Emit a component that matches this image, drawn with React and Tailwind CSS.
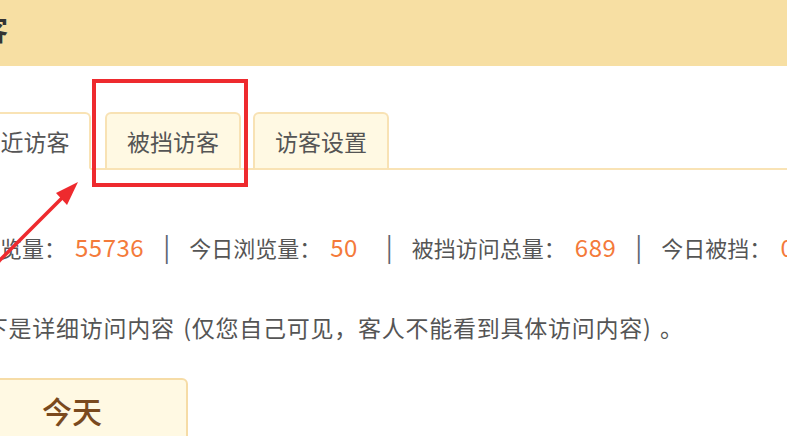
import React from 'react';

const stats = [
  { label: '总浏览量：', value: '55736' },
  { label: '今日浏览量：', value: '50' },
  { label: '被挡访问总量：', value: '689' },
  { label: '今日被挡：', value: '0' },
];

const tabs = [
  { name: '最近访客', active: true },
  { name: '被挡访客', active: false },
  { name: '访客设置', active: false },
];

const App = () => {
  return (
    <div
      className="relative w-[787px] h-[436px] overflow-hidden bg-white text-[#555]"
      style={{ fontFamily: '"Noto Sans CJK SC", "Noto Sans", sans-serif' }}
    >
      {/* header */}
      <div className="h-[66px] bg-[#f7dfa3]">
        <h1 className="ml-[-48px] pt-[14px] text-[28px] leading-[30px] font-bold text-[#333] whitespace-nowrap">访客</h1>
      </div>

      <div className="ml-[-44px]">
        {/* tabs */}
        <div className="mt-[46px] flex items-end border-b-2 border-[#f9e3b5]">
          {tabs.map((tab, i) => (
            <div
              key={tab.name}
              className={`h-[58px] mb-[-2px] flex items-center justify-center border-2 rounded-t-[6px] text-[23px] whitespace-nowrap ${
                tab.active
                  ? 'w-[135px] bg-white border-[#f9e3b5] border-b-white'
                  : 'w-[136px] bg-[#fff9e3] border-[#f8e2b4] border-b-[#f9e3b5]'
              } ${i === 1 ? 'ml-[14px]' : i === 2 ? 'ml-[12px]' : ''}`}
            >
              {tab.name}
            </div>
          ))}
        </div>

        {/* stats */}
        <div className="mt-[61px] h-[30px] flex items-baseline text-[22px] leading-[30px] whitespace-nowrap">
          {stats.map((s, i) => (
            <React.Fragment key={s.label}>
              {i > 0 && (
                <span className={`${i === 2 ? 'ml-[28px]' : 'ml-[19px]'} mr-[19px] text-[26px] text-[#5d6470]`}>|</span>
              )}
              <span>{s.label}</span>
              <span className="ml-[9px] text-[24px] tracking-[0.5px] text-[#f47a3a]">{s.value}</span>
            </React.Fragment>
          ))}
        </div>

        <p className="mt-[51px] pl-[5px] text-[23px] leading-[30px] tracking-[0.75px] whitespace-nowrap">
          以下是详细访问内容<span className="inline-block w-[17px] text-right">(</span>仅您自己可见，客人不能看到具体访问内容<span className="inline-block w-[17px] text-left">)</span>。
        </p>

        <button className="mt-[36px] w-[232px] h-[64px] flex items-center justify-center rounded-[6px] border-2 border-[#f6dca6] bg-[#fff9e3] text-[30px] font-medium text-[#7a4a1e]">
          今天
        </button>
      </div>

      {/* annotation overlay */}
      <div className="absolute left-[92px] top-[79px] w-[156px] h-[108px] border-[4px] border-[#ee2a2e]" />
      <svg className="absolute left-0 top-0" width="120" height="300" viewBox="0 0 120 300">
        <line x1="-6" y1="266" x2="68" y2="192" stroke="#ee2a2e" strokeWidth="3.5" />
        <polygon points="78,182 56,193 67,205" fill="#ee2a2e" />
      </svg>
    </div>
  );
};

export default App;
